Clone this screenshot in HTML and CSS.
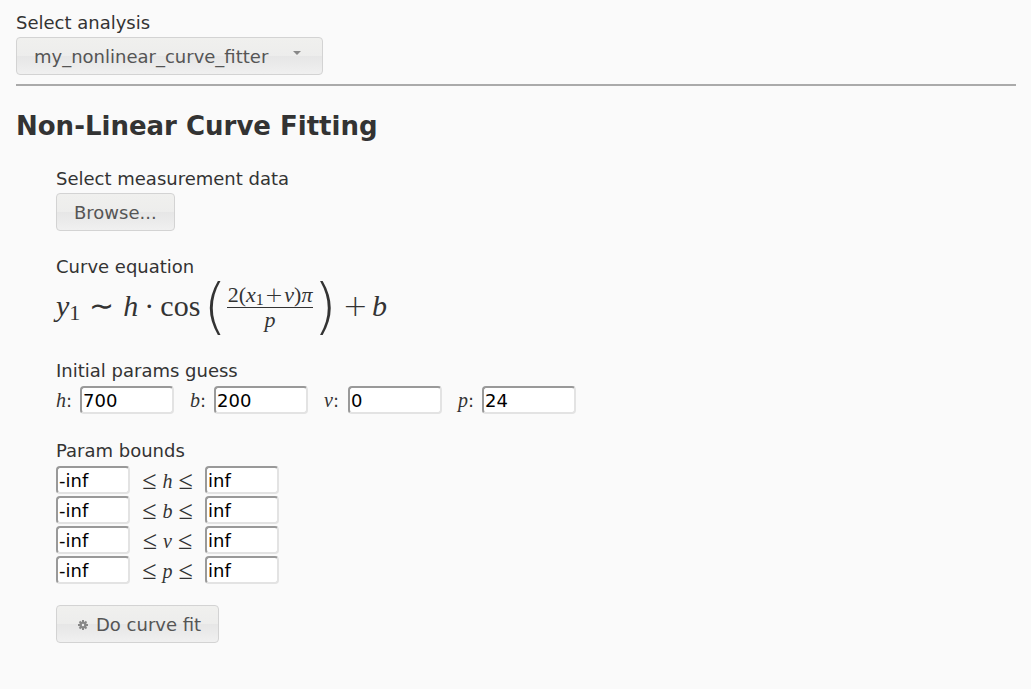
FILE: index.html
```html
<!DOCTYPE html>
<html lang="en">
<head>
<meta charset="utf-8">
<meta name="viewport" content="width=device-width, initial-scale=1">
<title>Non-Linear Curve Fitting</title>
<link rel="stylesheet" href="styles.css">
</head>
<body>
<header class="chooser">
  <label class="label" for="analysis">Select analysis</label>
  <div class="select-wrap">
    <select class="button select" id="analysis"><option>my_nonlinear_curve_fitter</option></select>
    <svg class="caret" width="8" height="4" viewBox="0 0 8 4" aria-hidden="true"><path d="M0 0h8L4 4z"/></svg>
  </div>
</header>
<main>
  <h1 class="title">Non-Linear Curve Fitting</h1>
  <form class="form">
    <section class="group">
      <label class="label" for="browse">Select measurement data</label>
      <button class="button" id="browse" type="button">Browse...</button>
    </section>
    <section class="group">
      <div class="label">Curve equation</div>
      <div class="equation">
        <span class="term"><i>y</i><span class="sub">1</span></span>
        <span class="term tilde">∼</span>
        <i class="term">h</i>
        <span class="term dot">·</span>
        <span class="term">cos</span>
        <span class="paren open">(</span>
        <span class="fraction">
          <span class="numerator">2(<i>x</i><span class="sub small">1</span><span class="inner-plus">+</span><i>v</i>)<i class="pi">π</i></span>
          <i class="denominator">p</i>
        </span>
        <span class="paren">)</span>
        <span class="term plus">+</span>
        <i class="term">b</i>
      </div>
    </section>
    <section class="group">
      <div class="label">Initial params guess</div>
      <div class="params">
        <div class="param"><label for="h"><i class="var">h</i>:</label><input class="input" id="h" value="700"></div>
        <div class="param"><label for="b"><i class="var">b</i>:</label><input class="input" id="b" value="200"></div>
        <div class="param"><label for="v"><i class="var">v</i>:</label><input class="input" id="v" value="0"></div>
        <div class="param"><label for="p"><i class="var">p</i>:</label><input class="input" id="p" value="24"></div>
      </div>
    </section>
    <section class="group">
      <div class="label">Param bounds</div>
      <div class="bounds">
        <input class="input" id="h-low" aria-label="h lower bound" value="-inf"><label class="range" for="h-low"><span class="leq">≤</span><i class="var">h</i><span class="leq">≤</span></label><input class="input" aria-label="h upper bound" value="inf">
        <input class="input" id="b-low" aria-label="b lower bound" value="-inf"><label class="range" for="b-low"><span class="leq">≤</span><i class="var">b</i><span class="leq">≤</span></label><input class="input" aria-label="b upper bound" value="inf">
        <input class="input" id="v-low" aria-label="v lower bound" value="-inf"><label class="range" for="v-low"><span class="leq">≤</span><i class="var">v</i><span class="leq">≤</span></label><input class="input" aria-label="v upper bound" value="inf">
        <input class="input" id="p-low" aria-label="p lower bound" value="-inf"><label class="range" for="p-low"><span class="leq">≤</span><i class="var">p</i><span class="leq">≤</span></label><input class="input" aria-label="p upper bound" value="inf">
      </div>
    </section>
    <button class="button run" type="button">
      <svg class="gear" width="10" height="10" viewBox="0 0 10 10" aria-hidden="true">
        <path d="M4 0h2v10H4zM0 4h10v2H0zM.8 2.2l1.4-1.4 7 7-1.4 1.4zM7.8.8l1.4 1.4-7 7-1.4-1.4z"/><circle cx="5" cy="5" r="3.6"/><circle class="hole" cx="5" cy="5" r="1.2"/>
      </svg>
      Do curve fit
    </button>
  </form>
</main>
</body>
</html>
```
FILE: styles.css
```css
* { box-sizing: border-box; }
body {
  margin: 0;
  padding: 11px 15px 16px 16px;
  background: #fafafa;
  color: #333;
  font: 18px/24px "DejaVu Sans", Verdana, sans-serif;
}
.chooser {
  padding-bottom: 9px;
  border-bottom: 2px solid #aaa;
}
.label { display: block; margin-bottom: 2px; }
.button {
  display: flex;
  align-items: center;
  height: 38px;
  padding: 2px 17px 0;
  border: 1px solid #d3d3d3;
  border-radius: 4px;
  background: linear-gradient(#f0f0ee, #ededec 50%, #e6e6e6 50%, #f0f0f0);
  color: #555;
  font: inherit;
}
.select-wrap { position: relative; width: 307px; max-width: 100%; }
.select { appearance: none; width: 100%; }
.caret { position: absolute; right: 22px; top: 14px; fill: #888; }
.title { margin: 24px 0 0; font-size: 26px; line-height: 32px; }
.form {
  display: flex;
  flex-direction: column;
  align-items: flex-start;
  padding: 25px 0 0 40px;
}
.group { margin-bottom: 24px; }
.group:last-of-type { margin-bottom: 21px; }
.equation {
  display: flex;
  align-items: center;
  height: 54px;
  font: 30px/36px "Liberation Serif", "Times New Roman", serif;
}
.term { padding-bottom: 4px; }
.sub { font-size: 22px; line-height: 1px; vertical-align: -4px; }
.small { font-size: 16px; vertical-align: -3px; }
.tilde { margin: 0 9px; }
.dot { margin: 0 6px; }
.plus { margin: 0 4px 0 6px; font-family: "DejaVu Sans", sans-serif; font-weight: 200; }
.paren { font: 200 60px/54px "DejaVu Sans", sans-serif; padding-bottom: 4px; }
.open { margin-left: 3px; }
.fraction { display: flex; flex-direction: column; align-items: center; font-size: 22px; line-height: 24px; padding-bottom: 2px; }
.numerator { padding: 0 1px; border-bottom: 1px solid #333; }
.inner-plus { margin: 0 1px; font-family: "DejaVu Sans", sans-serif; font-weight: 200; line-height: 1px; }
.var { font: italic 20px/22px "Liberation Serif", "Times New Roman", serif; }
.params { display: flex; flex-wrap: wrap; gap: 4px 16px; padding: 1px 0; }
.param { display: flex; align-items: center; }
.param label { width: 24px; padding-top: 2px; }
.input {
  width: 94px;
  height: 28px;
  padding: 1px 1px 0;
  border: 2px solid #e3e3e3;
  border-top-color: #999;
  border-left-color: #999;
  border-radius: 4px;
  background: #fff;
  color: #000;
  font: inherit;
}
.bounds { display: grid; grid-template-columns: 74px 75px 74px; gap: 2px 0; padding-top: 1px; }
.bounds .input { width: 100%; }
.range { display: flex; align-items: center; justify-content: center; gap: 6px; padding-top: 2px; }
.leq { font: 26px/24px "Liberation Serif", "Times New Roman", serif; }
.run { gap: 8px; padding-left: 21px; }
.gear { fill: #888; }
.hole { fill: #eee; }
```
